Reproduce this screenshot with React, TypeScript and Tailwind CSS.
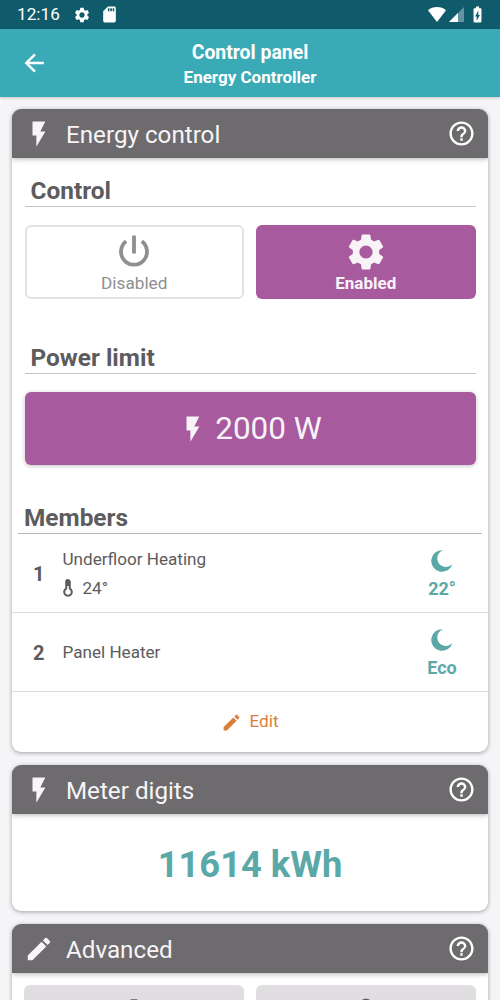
import type { ReactNode } from 'react';
import {
  MdBatteryChargingFull,
  MdEdit,
  MdFileDownload,
  MdHelpOutline,
  MdPerson,
  MdSdCard,
  MdSettings,
} from 'react-icons/md';

function BackIcon() {
  return (
    <svg viewBox="0 0 28 28" className="ml-[20px] h-[28px] w-[28px]" fill="none" stroke="currentColor" strokeWidth="2.4">
      <path d="M23.800 14H6.500M15 5.300 6.300 14l8.700 8.700" />
    </svg>
  );
}

function BoltIcon() {
  return (
    <svg viewBox="0 0 24 24" className="h-[30px] w-[30px]" fill="currentColor">
      <path d="M6.800 2v11.200h3.100V22.200l7.200-12.200h-4.100l4-8z" />
    </svg>
  );
}

function PowerIcon() {
  return (
    <svg viewBox="0 0 40 40" className="h-[40px] w-[40px]" fill="none" stroke="currentColor" strokeWidth="3.8">
      <path d="M20 4.500V22.500M12.200 10.300a13 13 0 1 0 15.600 0" />
    </svg>
  );
}

function MoonIcon() {
  return (
    <svg viewBox="0 0 22 22" className="h-[22px] w-[22px]" fill="currentColor">
      <path d="M12.2 .2A8.6 8.6 0 1 0 21.4 14A10.8 10.8 0 1 1 12.2 .2z" />
    </svg>
  );
}

function ThermometerIcon() {
  return (
    <svg viewBox="0 0 10 18" className="h-[18px] w-[10px]">
      <path
        d="M3.200 9.600V2.900a1.800 1.800 0 0 1 3.600 0v6.700a3.800 3.800 0 1 1-3.600 0z"
        fill="none"
        stroke="currentColor"
        strokeWidth="2"
      />
      <path d="M3 2h4v5H3z" fill="currentColor" />
    </svg>
  );
}

function StatusBar() {
  return (
    <div className="flex h-[29px] items-center bg-[#0f5a6b] pr-[13px] pl-[17px] text-white">
      <span className="w-[56px] pt-px text-[17.200px] leading-none">12:16</span>
      <MdSettings className="h-[18px] w-[18px]" />
      <MdSdCard className="ml-[9px] h-[19px] w-[19px]" />
      <div className="ml-auto flex items-center">
        <svg viewBox="0 0 18 15" className="h-[15px] w-[18px]" fill="currentColor">
          <path d="M9 15 0 3.200C2.400 1.200 5.500 0 9 0s6.600 1.200 9 3.200z" />
        </svg>
        <svg viewBox="0 0 15 15" className="ml-[3px] h-[15px] w-[15px]" fill="currentColor">
          <path d="M0 15 15 0v15z" opacity=".35" />
          <path d="M0 15 9 6v9z" />
        </svg>
        <MdBatteryChargingFull className="ml-[4px] h-[19px] w-[19px]" />
      </div>
    </div>
  );
}

function Card({
  icon,
  title,
  className,
  children,
}: {
  icon: ReactNode;
  title: string;
  className: string;
  children: ReactNode;
}) {
  return (
    <section className={`overflow-hidden rounded-[9px] bg-white shadow-[0_1px_4px_rgba(0,0,0,0.35)] ${className}`}>
      <div className="flex h-[49px] items-center bg-[#6d6b6d] px-3 text-[#f7f5f7] shadow-[0_1px_5px_rgba(0,0,0,0.3)]">
        {icon}
        <h2 className="ml-[12px] pt-[3px] text-[24.2px] leading-none">{title}</h2>
        <MdHelpOutline className="ml-auto h-[29px] w-[29px] text-white" />
      </div>
      {children}
    </section>
  );
}

function Member({ index, name, temp, mode }: { index: number; name: string; temp?: string; mode: string }) {
  return (
    <div className="flex h-[79px] items-center border-b border-[#dcdcdc] pr-[16px] pl-[21px]">
      <span className="w-[29.5px] pt-px text-[20px] leading-none font-bold">{index}</span>
      <div className="flex flex-1 flex-col gap-[3px] text-[17.1px] leading-[26px]">
        <span>{name}</span>
        {temp && (
          <span className="flex items-center gap-[10px]">
            <ThermometerIcon />
            {temp}
          </span>
        )}
      </div>
      <div className="flex w-[60px] flex-col items-center gap-[6px] pt-[4px] text-[#5ba8a9]">
        <MoonIcon />
        <span className="text-[18px] leading-[22px] font-bold">{mode}</span>
      </div>
    </div>
  );
}

export default function App() {
  return (
    <div className="h-[1000px] w-[500px] overflow-hidden bg-[#f5f4f6] font-['Roboto',sans-serif] text-[#5c5b5d]">
      <StatusBar />
      <header className="grid h-[68px] grid-cols-[68px_1fr_68px] items-center bg-[#3aabb6] text-white shadow-[0_1px_3px_rgba(0,0,0,0.2)]">
        <BackIcon />
        <div className="pt-[3px] text-center">
          <h1 className="text-[19.400px] leading-[25px] font-bold">Control panel</h1>
          <p className="text-[17px] leading-[24px] font-bold">Energy Controller</p>
        </div>
      </header>

      <main className="flex flex-col gap-[13px] px-3 pt-3">
        <Card icon={<BoltIcon />} title="Energy control" className="h-[643px]">
          <div className="px-[12.5px]">
            <h3 className="h-[49px] border-b border-[#c4c4c4] pt-[17px] pl-[6px] text-[24.4px] leading-[32px] font-bold">
              Control
            </h3>
            <div className="mt-[18px] grid h-[74px] grid-cols-2 gap-3">
              <button className="flex flex-col items-center rounded-[6px] border-2 border-[#e2e2e2] pt-[4px] text-[#8f8f8f]">
                <PowerIcon />
                <span className="mt-px text-[17.200px] leading-[22px]">Disabled</span>
              </button>
              <button className="flex flex-col items-center rounded-[6px] bg-[#a85a9f] pt-[5px] text-[#f7f3f7]">
                <MdSettings className="h-[44px] w-[44px]" />
                <span className="-mt-[2px] text-[17px] leading-[22px] font-bold">Enabled</span>
              </button>
            </div>
            <h3 className="mt-[26px] h-[49px] border-b border-[#c4c4c4] pt-[17px] pl-[6px] text-[24.4px] leading-[32px] font-bold">
              Power limit
            </h3>
            <button className="mt-[18px] flex h-[73px] w-full items-center justify-center rounded-[6px] bg-[#a85a9f] text-[#f7f3f7] shadow-[0_1px_4px_rgba(0,0,0,0.25)]">
              <BoltIcon />
              <span className="ml-[7px] text-[31.500px] leading-none">2000 W</span>
            </button>
          </div>
          <h3 className="mx-[6px] mt-[20px] h-[49px] border-b border-[#b5b5b5] pt-[17px] pl-[6px] text-[24.4px] leading-[32px] font-bold">
            Members
          </h3>
          <Member index={1} name="Underfloor Heating" temp="24°" mode="22°" />
          <Member index={2} name="Panel Heater" mode="Eco" />
          <button className="flex h-[60px] w-full items-center justify-center gap-[7px] text-[17.200px] text-[#da7f3a]">
            <MdEdit className="h-[21px] w-[21px]" />
            Edit
          </button>
        </Card>

        <Card icon={<BoltIcon />} title="Meter digits" className="h-[146px]">
          <p className="pt-[29px] text-center text-[36.300px] leading-[44px] font-bold text-[#5ba8a9]">11614 kWh</p>
        </Card>

        <Card icon={<MdEdit className="h-[30px] w-[30px]" />} title="Advanced" className="h-[260px]">
          <div className="mt-3 grid grid-cols-2 gap-3 px-3">
            <button className="flex h-[74px] justify-center rounded-[6px] bg-[#e0dee0] pt-[11px]">
              <MdFileDownload className="h-[26px] w-[26px]" />
            </button>
            <button className="flex h-[74px] justify-center rounded-[6px] bg-[#e0dee0] pt-[7px]">
              <MdPerson className="h-[40px] w-[40px]" />
            </button>
          </div>
        </Card>
      </main>
    </div>
  );
}
